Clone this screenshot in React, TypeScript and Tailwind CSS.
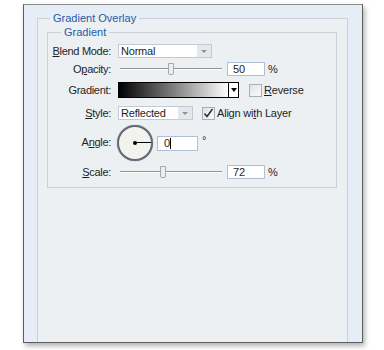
import React from 'react';

const label = "w-[63px] text-right text-[11px] tracking-[-0.3px] text-[#1e1e1e] leading-none";

function Key({ children }: { children: React.ReactNode }) {
  return <span className="underline underline-offset-[1px]">{children}</span>;
}

function Select({ value, width }: { value: string; width: string }) {
  return (
    <div className={`${width} h-[14px] flex border border-[#c3cad3] bg-white`}>
      <div className="flex-1 pl-[2px] text-[11px] tracking-[-0.2px] leading-[12px] text-[#1e1e1e]">{value}</div>
      <div className="w-[14px] bg-[#e4e7eb] flex items-center justify-center">
        <div className="w-0 h-0 border-l-[3px] border-r-[3px] border-t-[3px] border-l-transparent border-r-transparent border-t-[#8e939a]" />
      </div>
    </div>
  );
}

function Slider({ thumb }: { thumb: number }) {
  return (
    <div className="relative ml-[2px] w-[102px] h-[14px]">
      <div className="absolute left-0 right-0 top-[6px] h-[2px] border-t border-t-[#8f959c] border-b border-b-white" />
      <div
        className="absolute top-[1px] w-[6px] h-[12px] border border-[#a3a9b0] bg-[#eceef0] rounded-b-[2px]"
        style={{ left: thumb }}
      />
    </div>
  );
}

function NumInput({ value, caret }: { value: string; caret?: boolean }) {
  return (
    <div className="w-[38px] h-[14px] border border-[#b0c0d4] bg-white pl-[5px] flex items-center text-[11px] leading-none text-[#1e1e1e]">
      {value}
      {caret && <span className="w-px h-[11px] bg-black" />}
    </div>
  );
}

function Check({ checked }: { checked?: boolean }) {
  return (
    <div className="w-[13px] h-[13px] border border-[#a7afb9] bg-[linear-gradient(135deg,#dfe2e6,#fafbfc)] flex items-center justify-center">
      {checked && (
        <svg width="11" height="11" viewBox="0 0 11 11">
          <path d="M1.5 5.5 L4 8.5 L9.5 1" fill="none" stroke="#2a2a2a" strokeWidth="1.4" />
        </svg>
      )}
    </div>
  );
}

export default function App() {
  return (
    <div className="w-[384px] h-[350px] bg-white pt-[4px] pl-[23px] font-['Liberation_Sans',Arial,sans-serif]">
      <div className="w-[340px] h-[339px] border border-[#5d5d5d] border-t-[#8a8a8a] bg-[#e7edf6] pl-[13px] pt-[13px] shadow-[2px_3px_5px_rgba(0,0,0,0.3)]">
        {/* Gradient Overlay */}
        <div className="relative w-[311px] h-[324px] border border-b-0 border-[#ccd1d8] bg-[#edf0f3] pl-[9px] pt-[13px]">
          <span className="absolute -top-[7px] left-[12px] px-[3px] text-[11px] leading-[13px] text-[#235aa6] bg-[linear-gradient(to_bottom,#e7edf6_50%,#edf0f3_50%)]">
            Gradient Overlay
          </span>

          {/* Gradient */}
          <div className="relative w-[290px] h-[156px] border border-[#ccd1d8] pt-[11px]">
            <span className="absolute -top-[7px] left-[13px] px-[3px] text-[11px] leading-[13px] text-[#235aa6] bg-[#edf0f3]">
              Gradient
            </span>

            <div className="flex flex-col">
              <div className="flex items-center h-[14px] gap-[7px]">
                <div className={label}><Key>B</Key>lend Mode:</div>
                <Select value="Normal" width="w-[94px]" />
              </div>

              <div className="flex items-center h-[14px] mt-[4px] gap-[7px]">
                <div className={label}>O<Key>p</Key>acity:</div>
                <Slider thumb={48} />
                <div className="ml-[-2px]"><NumInput value="50" /></div>
                <span className="ml-[-4px] text-[11px] leading-none text-[#1e1e1e]">%</span>
              </div>

              <div className="flex items-center h-[16px] mt-[6px] gap-[7px]">
                <div className={label}>Gradient:</div>
                <div className="w-[121px] h-[16px] flex border border-black">
                  <div className="flex-1 bg-[linear-gradient(to_right,#000,#fff)]" />
                  <div className="w-[10px] border-l border-black bg-white flex items-center justify-center">
                    <div className="w-0 h-0 border-l-[3px] border-r-[3px] border-t-[4px] border-l-transparent border-r-transparent border-t-black" />
                  </div>
                </div>
                <div className="ml-[3px] flex items-center gap-[2px]">
                  <Check />
                  <span className="text-[11px] tracking-[-0.2px] leading-none text-[#1e1e1e]"><Key>R</Key>everse</span>
                </div>
              </div>

              <div className="flex items-center h-[14px] mt-[8px] gap-[7px]">
                <div className={label}><Key>S</Key>tyle:</div>
                <Select value="Reflected" width="w-[75px]" />
                <div className="ml-[2px] flex items-center gap-[2px]">
                  <Check checked />
                  <span className="text-[11px] tracking-[-0.2px] leading-none text-[#1e1e1e]">Align wi<Key>t</Key>h Layer</span>
                </div>
              </div>

              <div className="flex items-center h-[37px] mt-[4px] gap-[7px]">
                <div className={label}>A<Key>n</Key>gle:</div>
                <div className="relative ml-[-1px] w-[36px] h-[36px] rounded-full border-2 border-[#646a7a] bg-[#f3f2ee] shadow-[0_0_1px_rgba(0,0,0,0.4)]">
                  <div className="absolute left-1/2 top-1/2 w-[16px] h-px -mt-px bg-black" />
                  <div className="absolute left-1/2 top-1/2 w-[4px] h-[4px] -ml-[2px] -mt-[2px] rounded-full bg-black" />
                </div>
                <div className="ml-[-3px] mt-[2px] w-[41px] h-[15px] border border-[#b0c0d4] bg-white pl-[6px] flex items-center text-[11px] leading-none text-[#1e1e1e]">
                  0<span className="w-px h-[11px] bg-black" />
                </div>
                <span className="ml-[-3px] mb-[4px] text-[11px] leading-none text-[#1e1e1e]">°</span>
              </div>

              <div className="flex items-center h-[14px] mt-[4px] gap-[7px]">
                <div className={label}><Key>S</Key>cale:</div>
                <Slider thumb={40} />
                <div className="ml-[-2px]"><NumInput value="72" /></div>
                <span className="ml-[-4px] text-[11px] leading-none text-[#1e1e1e]">%</span>
              </div>
            </div>
          </div>
        </div>
      </div>
    </div>
  );
}
